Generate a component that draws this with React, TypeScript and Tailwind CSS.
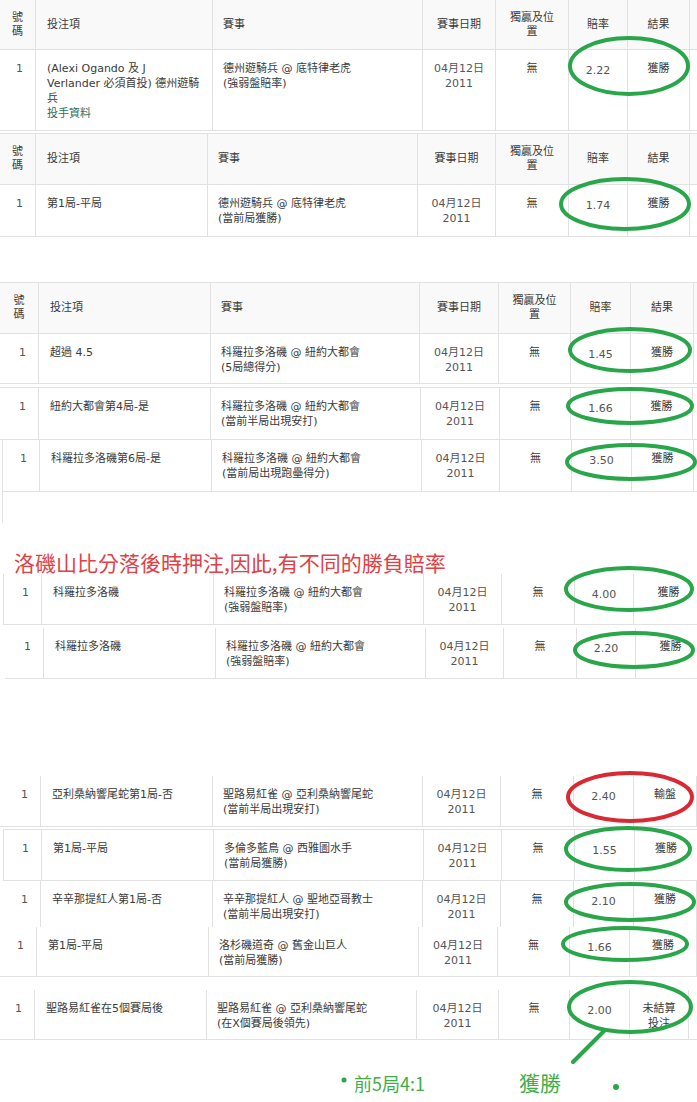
import type { ReactNode } from "react"

// pasted bet-slip strips, with hand-drawn circles on top
type Bet = {
  bet: ReactNode
  event: string
  kind: string
  odds: string
  result?: ReactNode
}

const line = "border-[#e1e1e1]"

interface RowProps {
  cols: string[]
  bet: Bet
  className?: string
  bottom?: boolean
}

function Row({ cols, bet, className = "", bottom = true }: RowProps) {
  return (
    <div
      className={`flex shrink-0 ${line} text-[11px] leading-[15px] text-[#3a3a3a] ${
        bottom ? "border-b" : ""
      } ${className}`}
    >
      <div className={`${cols[0]} shrink-0 border-r ${line} pt-[11px] pr-[12px] text-right text-[#555]`}>1</div>
      <div className={`${cols[1]} shrink-0 border-r ${line} pt-[11px] pl-[11px]`}>{bet.bet}</div>
      <div className={`${cols[2]} shrink-0 border-r ${line} pt-[11px] pl-[10px]`}>
        {bet.event}
        <br />({bet.kind})
      </div>
      <div className={`${cols[3]} shrink-0 border-r ${line} pt-[11px] text-center text-[#555]`}>
        04月12日
        <br />
        2011
      </div>
      <div className={`${cols[4]} shrink-0 border-r ${line} pt-[11px] text-center`}>無</div>
      <div className={`${cols[5]} shrink-0 border-r ${line} pt-[13px] text-center text-[#555]`}>{bet.odds}</div>
      <div className={`${cols[6]} shrink-0 border-r ${line} pt-[11px] text-center`}>{bet.result ?? "獲勝"}</div>
    </div>
  )
}

function Header({ cols, className = "" }: { cols: string[]; className?: string }) {
  const cell = `shrink-0 border-r ${line} flex items-center`
  return (
    <div className={`flex shrink-0 border-b ${line} bg-[#f9f9f9] text-[11px] leading-[14px] text-[#3a3a3a] ${className}`}>
      <div className={`${cols[0]} ${cell} justify-center`}>
        號<br />碼
      </div>
      <div className={`${cols[1]} ${cell} pl-[11px]`}>投注項</div>
      <div className={`${cols[2]} ${cell} pl-[10px]`}>賽事</div>
      <div className={`${cols[3]} ${cell} justify-center`}>賽事日期</div>
      <div className={`${cols[4]} ${cell} justify-center text-center`}>
        獨贏及位
        <br />置
      </div>
      <div className={`${cols[5]} ${cell} justify-center`}>賠率</div>
      <div className={`${cols[6]} ${cell} justify-center`}>結果</div>
    </div>
  )
}

const COLS_1 = ["w-[36px]", "w-[177px]", "w-[210px]", "w-[73px]", "w-[73px]", "w-[59px]", "w-[62px]"]
const COLS_2 = ["w-[36px]", "w-[172px]", "w-[210px]", "w-[78px]", "w-[73px]", "w-[59px]", "w-[62px]"]
const COLS_3 = ["w-[39px]", "w-[172px]", "w-[209px]", "w-[79px]", "w-[72px]", "w-[60px]", "w-[63px]"]
const COLS_3B = ["w-[39px]", "w-[172px]", "w-[210px]", "w-[79px]", "w-[71px]", "w-[60px]", "w-[62px]"]
const COLS_3C = ["w-[37px]", "w-[172px]", "w-[210px]", "w-[78px]", "w-[72px]", "w-[60px]", "w-[62px]"]
const COLS_4A = ["w-[38px]", "w-[172px]", "w-[210px]", "w-[78px]", "w-[73px]", "w-[59px]", "w-[70px]"]
const COLS_4B = ["w-[39px]", "w-[172px]", "w-[210px]", "w-[78px]", "w-[73px]", "w-[59px]", "w-[70px]"]
const COLS_5 = ["w-[41px]", "w-[172px]", "w-[210px]", "w-[78px]", "w-[73px]", "w-[60px]", "w-[63px]"]
const COLS_5B = ["w-[38px]", "w-[172px]", "w-[210px]", "w-[78px]", "w-[73px]", "w-[60px]", "w-[63px]"]
const COLS_5D = ["w-[37px]", "w-[172px]", "w-[210px]", "w-[79px]", "w-[72px]", "w-[60px]", "w-[67px]"]
const COLS_5E = ["w-[35px]", "w-[172px]", "w-[210px]", "w-[82px]", "w-[71px]", "w-[60px]", "w-[59px]"]

const rockies = "科羅拉多洛磯 @ 紐約大都會"

const ellipses = [
  { cx: 629, cy: 66, rx: 59, ry: 28 },
  { cx: 625, cy: 204, rx: 64, ry: 25 },
  { cx: 630, cy: 350, rx: 60, ry: 21 },
  { cx: 630, cy: 406, rx: 62, ry: 17 },
  { cx: 631, cy: 462, rx: 64, ry: 17 },
  { cx: 629, cy: 589, rx: 63, ry: 21 },
  { cx: 634, cy: 650, rx: 59, ry: 17 },
  { cx: 628, cy: 849, rx: 62, ry: 21 },
  { cx: 630, cy: 902, rx: 64, ry: 18 },
  { cx: 625, cy: 944, rx: 62, ry: 16 },
  { cx: 630, cy: 1007, rx: 61, ry: 25 },
]

export default function App() {
  return (
    <div className="relative flex h-[1102px] w-[697px] flex-col overflow-hidden bg-white font-['DejaVu_Sans','Noto_Sans_CJK_TC',sans-serif]">
      {/* strip 1 */}
      <Header cols={COLS_1} className="h-[50px]" />
      <Row
        cols={COLS_1}
        className="h-[81px]"
        bet={{
          bet: (
            <>
              (Alexi Ogando 及 J
              <br />
              Verlander 必須首投) 德州遊騎
              <br />兵
              <br />
              <span className="text-[#2c6e5c]">投手資料</span>
            </>
          ),
          event: "德州遊騎兵 @ 底特律老虎",
          kind: "強弱盤賠率",
          odds: "2.22",
        }}
      />

      {/* strip 2 */}
      <Header cols={COLS_2} className="mt-[2px] h-[52px] border-t" />
      <Row
        cols={COLS_2}
        className="h-[52px]"
        bet={{ bet: "第1局-平局", event: "德州遊騎兵 @ 底特律老虎", kind: "當前局獲勝", odds: "1.74" }}
      />

      {/* strip 3 */}
      <Header cols={COLS_3} className="mt-[45px] h-[52px] border-t" />
      <Row cols={COLS_3} className="h-[50px]" bet={{ bet: "超過 4.5", event: rockies, kind: "5局總得分", odds: "1.45" }} />
      <Row
        cols={COLS_3B}
        className="mt-[3px] h-[53px] border-t"
        bet={{ bet: "紐約大都會第4局-是", event: rockies, kind: "當前半局出現安打", odds: "1.66" }}
      />
      <Row
        cols={COLS_3C}
        className="ml-[2px] h-[52px] border-l"
        bet={{ bet: "科羅拉多洛磯第6局-是", event: rockies, kind: "當前局出現跑壘得分", odds: "3.50" }}
      />
      <div className={`ml-[2px] h-[31px] shrink-0 border-l ${line}`} />

      <div className="shrink-0 pt-[27px] pl-[14px] font-['Noto_Sans_CJK_TC',sans-serif] text-[21px] leading-[24px] text-[#e04145]">
        洛磯山比分落後時押注,因此,有不同的勝負賠率
      </div>

      {/* strip 4 */}
      <Row
        cols={COLS_4A}
        className="ml-[3px] h-[51px] border-l"
        bet={{ bet: "科羅拉多洛磯", event: rockies, kind: "強弱盤賠率", odds: "4.00" }}
      />
      <Row
        cols={COLS_4B}
        className="mt-[3px] ml-[5px] h-[51px]"
        bet={{ bet: "科羅拉多洛磯", event: rockies, kind: "強弱盤賠率", odds: "2.20" }}
      />

      {/* strip 5 */}
      <Row
        cols={COLS_5}
        className="mt-[97px] h-[51px]"
        bet={{
          bet: "亞利桑納響尾蛇第1局-否",
          event: "聖路易紅雀 @ 亞利桑納響尾蛇",
          kind: "當前半局出現安打",
          odds: "2.40",
          result: "輸盤",
        }}
      />
      <Row
        cols={COLS_5B}
        className="mt-[2px] ml-[3px] h-[52px] border-t border-l"
        bet={{ bet: "第1局-平局", event: "多倫多藍鳥 @ 西雅圖水手", kind: "當前局獲勝", odds: "1.55" }}
      />
      <Row
        cols={COLS_5}
        className="h-[46px]"
        bottom={false}
        bet={{
          bet: "辛辛那提紅人第1局-否",
          event: "辛辛那提紅人 @ 聖地亞哥教士",
          kind: "當前半局出現安打",
          odds: "2.10",
        }}
      />
      <Row
        cols={COLS_5D}
        className="h-[50px]"
        bet={{ bet: "第1局-平局", event: "洛杉磯道奇 @ 舊金山巨人", kind: "當前局獲勝", odds: "1.66" }}
      />
      <Row
        cols={COLS_5E}
        className="mt-[13px] h-[50px]"
        bet={{
          bet: "聖路易紅雀在5個賽局後",
          event: "聖路易紅雀 @ 亞利桑納響尾蛇",
          kind: "在X個賽局後領先",
          odds: "2.00",
          result: (
            <>
              未結算
              <br />
              投注
            </>
          ),
        }}
      />

      <div className="mt-[30px] flex shrink-0 items-end pl-[354px] font-['Noto_Sans_CJK_TC',sans-serif] text-[#3fae49]">
        <span className="text-[18px] leading-[22px]">前5局4:1</span>
        <span className="ml-[94px] text-[21px] leading-[24px]">獲勝</span>
      </div>

      {/* annotation layer */}
      <svg className="pointer-events-none absolute top-0 left-0" width="697" height="1102" viewBox="0 0 697 1102">
        {ellipses.map((e, i) => (
          <ellipse key={i} cx={e.cx} cy={e.cy} rx={e.rx} ry={e.ry} fill="none" stroke="#2aa64a" strokeWidth="4" />
        ))}
        <ellipse cx="630" cy="797" rx="62" ry="24" fill="none" stroke="#d92a33" strokeWidth="4" />
        <line x1="604" y1="1031" x2="573" y2="1062" stroke="#2aa64a" strokeWidth="4" strokeLinecap="round" />
        <circle cx="344" cy="1080" r="2.5" fill="#2aa64a" />
        <circle cx="616" cy="1087" r="3" fill="#2aa64a" />
      </svg>
    </div>
  )
}
